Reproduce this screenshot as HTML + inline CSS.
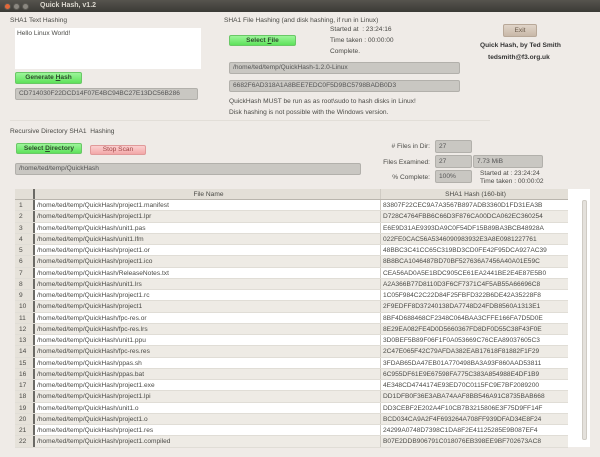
<!DOCTYPE html>
<html><head><meta charset="utf-8"><style>
*{margin:0;padding:0;box-sizing:border-box}
body{width:600px;height:457px;background:#efebe7;font-family:"Liberation Sans",sans-serif;font-size:6.6px;color:#4a4a46;position:relative;overflow:hidden}
.a{position:absolute;white-space:nowrap}
.title{left:0;top:0;width:600px;height:12px;background:linear-gradient(#56544e,#3b3a36);color:#dcd8cf;font-weight:bold;font-size:7px}
.dot{position:absolute;top:2.5px;width:7px;height:7px;border-radius:50%;background:#8a8780;border:1px solid #5a5852}
.dot.r{background:#e2683a}
.field{background:#c9c7c2;border:1px solid #b2b0ab;border-radius:2px;padding-left:3px;line-height:10px;color:#555}
.green{background:linear-gradient(#9cf59a,#5ee25a);border:1px solid #6ac866;border-radius:2px;font-weight:bold;color:#2e4d2d;text-align:center}
.tbl{left:15px;top:189px;width:553px}
.row{display:flex;height:11.25px;line-height:11px;border-bottom:1px solid #e0ddd6}
.row div{overflow:hidden}
.n{width:20px;background:#e6e2da;border-right:2px solid #6b6a65;padding-left:4px}
.f{width:346px;padding-left:2px;border-right:1px solid #cfcbc3}
.h{width:187px;padding-left:2px}
.row:nth-child(even){background:#fff}
.row:nth-child(odd){background:#eeebe5}
.hd{background:#e3dfd7!important;height:11px;border-bottom:1px solid #b9b5ad}
.lbl{text-align:right;width:80px}
</style></head><body>
<div class="a title"><span class="dot r" style="left:4px"></span><span class="dot" style="left:13px"></span><span class="dot" style="left:22px"></span><span class="a" style="left:40px;top:2px">Quick Hash, v1.2</span></div>

<div class="a" style="left:10px;top:17px">SHA1 Text Hashing</div>
<div class="a" style="left:15px;top:28px;width:186px;height:41px;background:#fff;padding:2px">Hello Linux World!</div>
<div class="a green" style="left:15px;top:72px;width:67px;height:12px;line-height:10px">Generate <u>H</u>ash</div>
<div class="a field" style="left:15px;top:88px;width:183px;height:12px">CD714030F22DCD14F07E4BC94BC27E13DC56B286</div>
<div class="a" style="left:10px;top:120px;width:480px;height:1px;background:#e2ded8"></div>

<div class="a" style="left:224px;top:17px">SHA1 File Hashing (and disk hashing, if run in Linux)</div>
<div class="a green" style="left:229px;top:35px;width:67px;height:11px;line-height:9px">Select <u>F</u>ile</div>
<div class="a" style="left:330px;top:26px">Started at &nbsp;: 23:24:16</div>
<div class="a" style="left:330px;top:37px">Time taken : 00:00:00</div>
<div class="a" style="left:330px;top:48px">Complete.</div>
<div class="a field" style="left:229px;top:62px;width:231px;height:12px">/home/ted/temp/QuickHash-1.2.0-Linux</div>
<div class="a field" style="left:229px;top:80px;width:231px;height:12px">6682F6AD318A1A8BEE7EDC0F5D9BC5798BADB0D3</div>
<div class="a" style="left:229px;top:98px">QuickHash MUST be run as as root\sudo to hash disks in Linux!</div>
<div class="a" style="left:229px;top:109px">Disk hashing is not possible with the Windows version.</div>

<div class="a" style="left:503px;top:24px;width:34px;height:13px;background:linear-gradient(#e0d4c8,#c8b8a8);border:1px solid #b8a898;border-radius:2px;text-align:center;line-height:11px;color:#6a5a4a">Exit</div>
<div class="a" style="left:480px;top:42px;font-weight:bold;color:#333">Quick Hash, by Ted Smith</div>
<div class="a" style="left:488px;top:54px;font-weight:bold;color:#333">tedsmith@f3.org.uk</div>

<div class="a" style="left:10px;top:128px">Recursive Directory SHA1 &nbsp;Hashing</div>
<div class="a green" style="left:16px;top:143px;width:66px;height:11px;line-height:9px">Select <u>D</u>irectory</div>
<div class="a" style="left:90px;top:145px;width:56px;height:10px;background:linear-gradient(#fbd0d0,#f2a8a8);border:1px solid #e09a9a;border-radius:2px;text-align:center;line-height:8px;color:#a04848">Stop Scan</div>
<div class="a field" style="left:15px;top:163px;width:346px;height:12px">/home/ted/temp/QuickHash</div>

<div class="a lbl" style="left:350px;top:143px">#&nbsp;Files in Dir:</div>
<div class="a field" style="left:435px;top:140px;width:37px;height:13px;line-height:11px">27</div>
<div class="a lbl" style="left:350px;top:159px">Files Examined:</div>
<div class="a field" style="left:435px;top:155px;width:37px;height:13px;line-height:11px">27</div>
<div class="a field" style="left:473px;top:155px;width:70px;height:13px;line-height:11px">7.73 MiB</div>
<div class="a lbl" style="left:350px;top:174px">% Complete:</div>
<div class="a field" style="left:435px;top:170px;width:37px;height:13px;line-height:11px">100%</div>
<div class="a" style="left:480px;top:170px">Started at : 23:24:24</div>
<div class="a" style="left:480px;top:178px">Time taken : 00:00:02</div>

<div class="a tbl">
<div class="row hd"><div class="n" style="background:#e3dfd7"></div><div class="f" style="text-align:center">File Name</div><div class="h" style="text-align:center">SHA1 Hash (160-bit)</div></div>
<div class="row"><div class="n">1</div><div class="f">/home/ted/temp/QuickHash/project1.manifest</div><div class="h">83807F22CEC9A7A3567B897ADB3360D1FD31EA3B</div></div>
<div class="row"><div class="n">2</div><div class="f">/home/ted/temp/QuickHash/project1.lpr</div><div class="h">D728C4764FBB6C66D3F876CA00DCA062EC360254</div></div>
<div class="row"><div class="n">3</div><div class="f">/home/ted/temp/QuickHash/unit1.pas</div><div class="h">E6E9D31AE9393DA9C0F54DF15B89BA3BCB48928A</div></div>
<div class="row"><div class="n">4</div><div class="f">/home/ted/temp/QuickHash/unit1.lfm</div><div class="h">022FE0CAC56A5346090983932E3A8E0981227761</div></div>
<div class="row"><div class="n">5</div><div class="f">/home/ted/temp/QuickHash/project1.or</div><div class="h">48BBC3C41CC65C319BD3CD0FE42F95DCA927AC39</div></div>
<div class="row"><div class="n">6</div><div class="f">/home/ted/temp/QuickHash/project1.ico</div><div class="h">8B8BCA1046487BD70BF527636A7456A40A01E59C</div></div>
<div class="row"><div class="n">7</div><div class="f">/home/ted/temp/QuickHash/ReleaseNotes.txt</div><div class="h">CEA56AD0A5E1BDC905CE61EA2441BE2E4E87E5B0</div></div>
<div class="row"><div class="n">8</div><div class="f">/home/ted/temp/QuickHash/unit1.lrs</div><div class="h">A2A366B77D8110D3F6CF7371C4F5AB55A66696C8</div></div>
<div class="row"><div class="n">9</div><div class="f">/home/ted/temp/QuickHash/project1.rc</div><div class="h">1C05F984C2C22D84F25FBFD322B6DE42A35228F8</div></div>
<div class="row"><div class="n">10</div><div class="f">/home/ted/temp/QuickHash/project1</div><div class="h">2F9EDFF8D37240138DA7748D24FDB8560A1313E1</div></div>
<div class="row"><div class="n">11</div><div class="f">/home/ted/temp/QuickHash/fpc-res.or</div><div class="h">8BF4D688468CF2348C064BAA3CFFE166FA7D5D0E</div></div>
<div class="row"><div class="n">12</div><div class="f">/home/ted/temp/QuickHash/fpc-res.lrs</div><div class="h">8E29EA082FE4D0D5660367FD8DF0D55C38F43F0E</div></div>
<div class="row"><div class="n">13</div><div class="f">/home/ted/temp/QuickHash/unit1.ppu</div><div class="h">3D0BEF5B89F06F1F0A053669C76CEA89037605C3</div></div>
<div class="row"><div class="n">14</div><div class="f">/home/ted/temp/QuickHash/fpc-res.res</div><div class="h">2C47E065F42C79AFDA382EAB17618F81882F1F29</div></div>
<div class="row"><div class="n">15</div><div class="f">/home/ted/temp/QuickHash/ppas.sh</div><div class="h">3FDAB65DA47EB01A770498BA3A93F860AAD53811</div></div>
<div class="row"><div class="n">16</div><div class="f">/home/ted/temp/QuickHash/ppas.bat</div><div class="h">6C955DF61E9E67598FA775C383A854988E4DF1B9</div></div>
<div class="row"><div class="n">17</div><div class="f">/home/ted/temp/QuickHash/project1.exe</div><div class="h">4E348CD4744174E93ED70C0115FC9E7BF2089200</div></div>
<div class="row"><div class="n">18</div><div class="f">/home/ted/temp/QuickHash/project1.lpi</div><div class="h">DD1DFB0F36E3ABA74AAF8BB546A91C8735BAB668</div></div>
<div class="row"><div class="n">19</div><div class="f">/home/ted/temp/QuickHash/unit1.o</div><div class="h">DD3CEBF2E202A4F10CB7B3215806E3F75D9FF14F</div></div>
<div class="row"><div class="n">20</div><div class="f">/home/ted/temp/QuickHash/project1.o</div><div class="h">BCD034CA9A2F4F693264A708FF939DFAD34E8F24</div></div>
<div class="row"><div class="n">21</div><div class="f">/home/ted/temp/QuickHash/project1.res</div><div class="h">24299A0748D7398C1DA8F2E41125285E9B087EF4</div></div>
<div class="row"><div class="n">22</div><div class="f">/home/ted/temp/QuickHash/project1.compiled</div><div class="h">B07E2DDB906791C018076EB398EE9BF702673AC8</div></div>
</div>
<div class="a" style="left:568px;top:189px;width:22px;height:258px;background:#fff"></div>
<div class="a" style="left:582px;top:200px;width:5px;height:240px;background:#e4e1dc;border:1px solid #cfcbc4;border-radius:2px"></div>
</body></html>
